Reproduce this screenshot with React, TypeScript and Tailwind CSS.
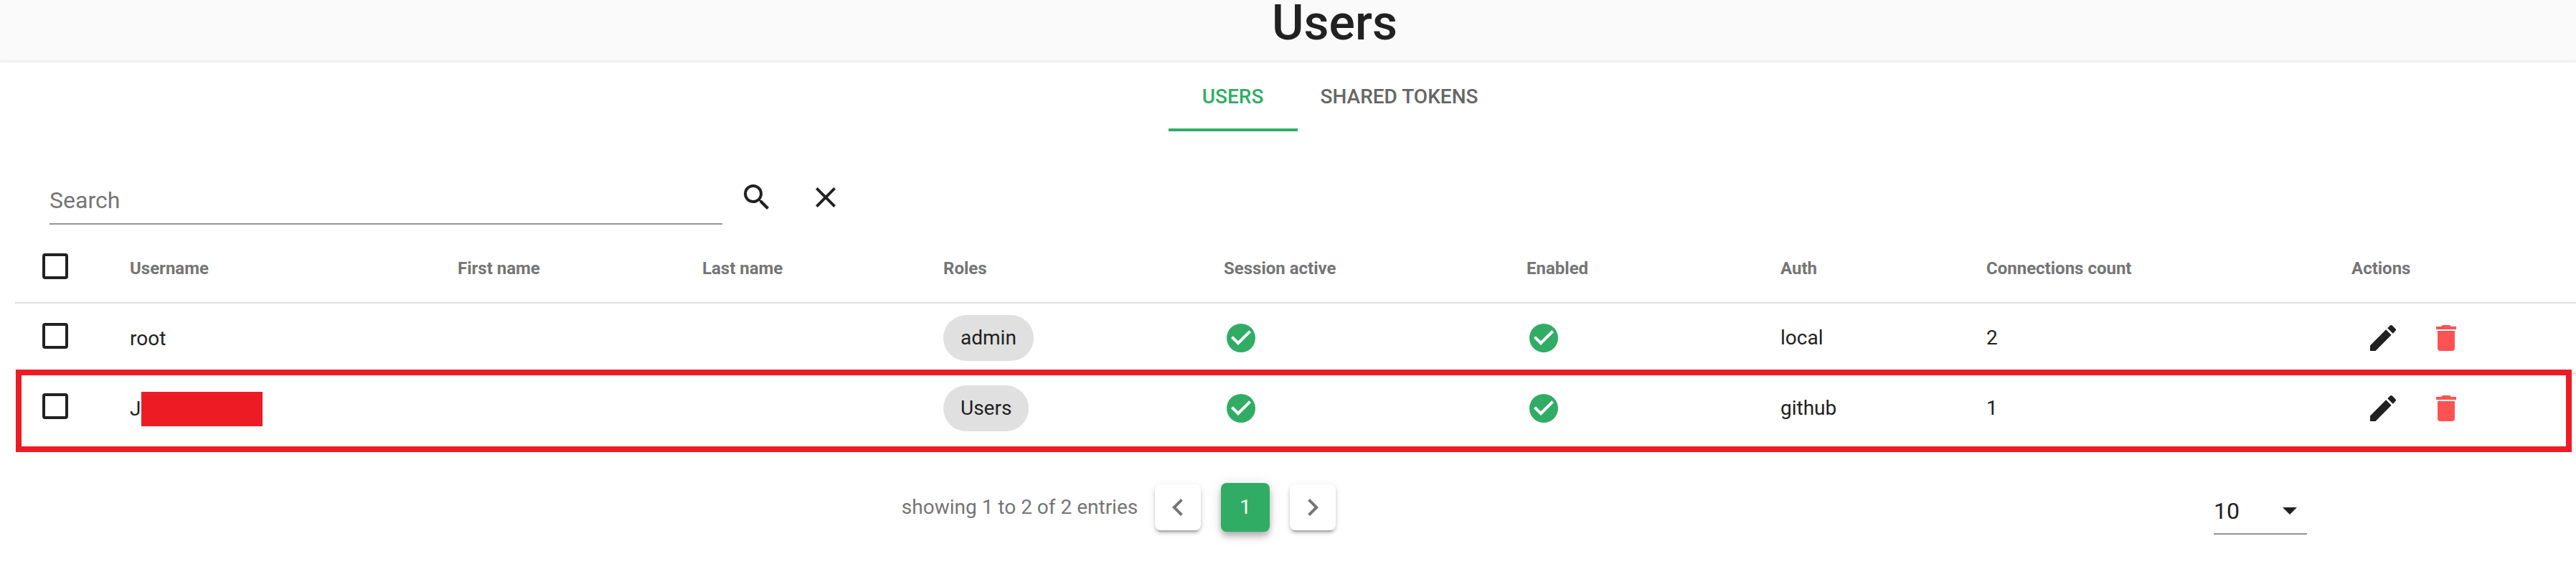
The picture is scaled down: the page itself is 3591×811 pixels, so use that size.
import { useState } from "react";

const icons = {
  magnify:
    "M9.5,3A6.5,6.5 0 0,1 16,9.5C16,11.11 15.41,12.59 14.44,13.73L14.71,14H15.5L20.5,19L19,20.5L14,15.5V14.71L13.73,14.44C12.59,15.41 11.11,16 9.5,16A6.5,6.5 0 0,1 3,9.5A6.5,6.5 0 0,1 9.5,3M9.5,5C7,5 5,7 5,9.5C5,12 7,14 9.5,14C12,14 14,12 14,9.5C14,7 12,5 9.5,5Z",
  close:
    "M19,6.41L17.59,5L12,10.59L6.41,5L5,6.41L10.59,12L5,17.59L6.41,19L12,13.41L17.59,19L19,17.59L13.41,12L19,6.41Z",
  checkCircle:
    "M12,2A10,10 0 0,1 22,12A10,10 0 0,1 12,22A10,10 0 0,1 2,12A10,10 0 0,1 12,2M10,17L19,8L17.59,6.58L10,14.17L6.41,10.59L5,12L10,17Z",
  pencil:
    "M20.71,7.04C21.1,6.65 21.1,6 20.71,5.63L18.37,3.29C18,2.9 17.35,2.9 16.96,3.29L15.12,5.12L18.87,8.87M3,17.25V21H6.75L17.81,9.93L14.06,6.18L3,17.25Z",
  trash:
    "M19,4H15.5L14.5,3H9.5L8.5,4H5V6H19M6,19A2,2 0 0,0 8,21H16A2,2 0 0,0 18,19V7H6V19Z",
  chevronLeft: "M15.41,16.58L10.83,12L15.41,7.41L14,6L8,12L14,18L15.41,16.58Z",
  chevronRight: "M8.59,16.58L13.17,12L8.59,7.41L10,6L16,12L10,18L8.59,16.58Z",
  menuDown: "M7,10L12,15L17,10H7Z",
};

function Icon({ name, className = "" }: { name: keyof typeof icons; className?: string }) {
  return (
    <svg viewBox="0 0 24 24" fill="currentColor" aria-hidden="true" className={`size-12 shrink-0 ${className}`}>
      <path d={icons[name]} />
    </svg>
  );
}

function Checkbox({ label }: { label: string }) {
  return (
    <input
      type="checkbox"
      aria-label={label}
      className="block size-9 appearance-none rounded-sm border-4 border-[#212121] checked:bg-[#212121]"
    />
  );
}

const columns = [
  { title: "Username", width: "w-[457px]" },
  { title: "First name", width: "w-[341px]" },
  { title: "Last name", width: "w-[336px]" },
  { title: "Roles", width: "w-[391px]" },
  { title: "Session active", width: "w-[422px]" },
  { title: "Enabled", width: "w-[354px]" },
  { title: "Auth", width: "w-[287px]" },
  { title: "Connections count", width: "w-[509px]" },
  { title: "Actions", width: "" },
];

const users = [
  { name: "root", redacted: false, role: "admin", auth: "local", connections: 2 },
  { name: "J", redacted: true, role: "Users", auth: "github", connections: 1 },
];

export default function App() {
  const [query, setQuery] = useState("");
  const [tab, setTab] = useState("USERS");

  return (
    <div className="min-h-screen overflow-x-hidden bg-white font-[Roboto,sans-serif] text-[28px] leading-8 text-[#212121]">
      <header className="flex h-[87px] justify-center bg-[#fafafa] pl-[130px] shadow-[inset_0_-4px_4px_-2px_rgba(0,0,0,0.06)]">
        <h1 className="text-[68px] leading-[64px] font-medium">Users</h1>
      </header>

      <nav className="flex justify-center pl-[130px]">
        {["USERS", "SHARED TOKENS"].map((name) => (
          <button
            key={name}
            type="button"
            onClick={() => setTab(name)}
            className={`h-24 min-w-[180px] border-b-4 px-8 pt-1 font-medium ${
              tab === name ? "border-[#31ac64] text-[#31ac64]" : "border-transparent text-[#666666]"
            }`}
          >
            {name}
          </button>
        ))}
      </nav>

      <form className="mt-16 flex h-[66px] items-start pl-[69px]" onSubmit={(e) => e.preventDefault()}>
        <input
          type="text"
          aria-label="Search"
          placeholder="Search"
          value={query}
          onChange={(e) => setQuery(e.target.value)}
          className="h-[66px] w-[938px] border-b-2 border-[#949494] text-[32px] outline-none placeholder:text-[#757575]"
        />
        <button type="submit" aria-label="Search" className="mt-1 ml-6">
          <Icon name="magnify" />
        </button>
        <button type="button" aria-label="Clear search" onClick={() => setQuery("")} className="mt-1 ml-12">
          <Icon name="close" />
        </button>
      </form>

      <div className="relative pl-[21px]">
        <table className="w-full table-fixed border-separate border-spacing-0 text-left">
          <colgroup>
            <col className="w-[112px]" />
            {columns.map((c) => (
              <col key={c.title} className={c.width} />
            ))}
          </colgroup>
          <thead>
            <tr className="h-[110px]">
              <th className="border-b-2 border-[#e0e0e0] pt-2 pl-[38px]">
                <Checkbox label="Select all users" />
              </th>
              {columns.map((c) => (
                <th
                  key={c.title}
                  className="border-b-2 border-[#e0e0e0] pt-3.5 pl-12 text-2xl font-bold whitespace-nowrap text-[#757575]"
                >
                  {c.title}
                </th>
              ))}
            </tr>
          </thead>
          <tbody className="[&_td]:border-b-2 [&_td]:border-[#e0e0e0] [&_td]:pl-12 [&_tr:last-child_td]:border-transparent">
            {users.map((u) => (
              <tr key={u.name} className="h-[98px]">
                <td className="pb-1.5 pl-[38px]!">
                  <Checkbox label={`Select ${u.name}`} />
                </td>
                <td className="pt-0.5">
                  <span className="flex items-center gap-px">
                    {u.name}
                    {u.redacted && <span className="h-12 w-[169px] bg-[#ed1c24]" />}
                  </span>
                </td>
                <td />
                <td />
                <td>
                  <span className="inline-flex h-16 items-center rounded-full bg-[#e0e0e0] px-6 align-middle">
                    {u.role}
                  </span>
                </td>
                <td>
                  <Icon name="checkCircle" className="text-[#31ac64]" />
                </td>
                <td>
                  <Icon name="checkCircle" className="text-[#31ac64]" />
                </td>
                <td>{u.auth}</td>
                <td>{u.connections}</td>
                <td>
                  <span className="flex gap-10 pl-5">
                    <button type="button" aria-label={`Edit ${u.name}`}>
                      <Icon name="pencil" />
                    </button>
                    <button type="button" aria-label={`Delete ${u.name}`}>
                      <Icon name="trash" className="text-[#ff5252]" />
                    </button>
                  </span>
                </td>
              </tr>
            ))}
          </tbody>
        </table>
        <div className="pointer-events-none absolute right-1.5 -bottom-[11px] left-[22px] h-[115px] border-8 border-[#ed1c24]" />
      </div>

      <footer className="mt-[50px] flex items-center pl-[35%] text-[#757575]">
        <span className="mr-6">showing 1 to 2 of 2 entries</span>
        <div className="flex items-center gap-7">
          <button
            type="button"
            aria-label="Previous page"
            className="flex size-16 items-center justify-center rounded-lg bg-white shadow-[0_6px_2px_-4px_rgba(0,0,0,0.2),0_4px_4px_rgba(0,0,0,0.14),0_2px_10px_rgba(0,0,0,0.12)]"
          >
            <Icon name="chevronLeft" />
          </button>
          <button
            type="button"
            className="size-[68px] rounded-lg bg-[#31ac64] text-white shadow-[0_4px_8px_-2px_rgba(0,0,0,0.2),0_8px_10px_rgba(0,0,0,0.14),0_2px_20px_rgba(0,0,0,0.12)]"
          >
            1
          </button>
          <button
            type="button"
            aria-label="Next page"
            className="flex size-16 items-center justify-center rounded-lg bg-white shadow-[0_6px_2px_-4px_rgba(0,0,0,0.2),0_4px_4px_rgba(0,0,0,0.14),0_2px_10px_rgba(0,0,0,0.12)]"
          >
            <Icon name="chevronRight" />
          </button>
        </div>
        <div className="relative mt-3 mr-[375px] ml-auto text-[#212121]">
          <select
            aria-label="Entries per page"
            defaultValue="10"
            className="block h-16 w-[130px] appearance-none border-b-2 border-[#949494] text-[32px]"
          >
            <option>10</option>
            <option>25</option>
            <option>50</option>
          </select>
          <Icon name="menuDown" className="pointer-events-none absolute top-1.5 right-0" />
        </div>
      </footer>
    </div>
  );
}
